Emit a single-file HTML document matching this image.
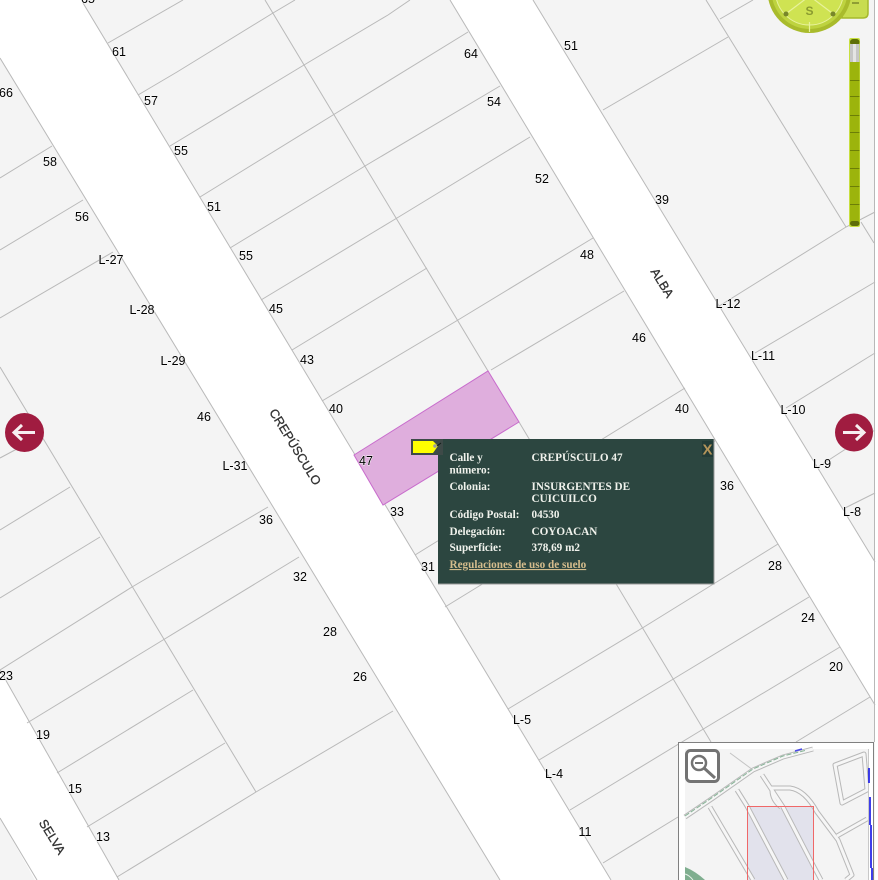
<!DOCTYPE html>
<html>
<head>
<meta charset="utf-8">
<title>Mapa</title>
<style>
html,body{margin:0;padding:0;background:#fff;width:878px;height:880px;overflow:hidden}
svg{display:block;filter:blur(.3px)}
.l text{font:12.5px "Liberation Sans",sans-serif;fill:#000;text-anchor:middle;paint-order:stroke;stroke:#f8f8f8;stroke-width:1px}
.s{font:12.5px "Liberation Sans",sans-serif;fill:#333;text-anchor:middle;stroke:#333;stroke-width:.3px}
.p text{font:bold 11.2px "Liberation Serif",serif;fill:#f0f2ec}
</style>
</head>
<body>
<svg width="878" height="880" viewBox="0 0 878 880" xmlns="http://www.w3.org/2000/svg">
<rect width="878" height="880" fill="#f4f4f4"/>
<!-- roads -->
<g fill="#fff">
<polygon points="0,58 0,-2 80,-2 83,3 611,880 500,880"/>
<polygon points="450,0 533,0 875,562 875,705"/>
<polygon points="0,670 117,877 119,880 35,880 0,818"/>
<rect x="875" y="0" width="3" height="880"/>
</g>
<!-- road edges and lot lines -->
<g fill="none" stroke="#b9b9b9" stroke-width="1">
<path d="M83,3 L611,880"/>
<path d="M0,58 L500,880"/>
<path d="M450,0 L875,705"/>
<path d="M533,0 L875,562"/>
<path d="M0,670 L119,880"/>
<path d="M0,818 L37,880"/>
<path d="M265,0 L488,371"/>
<path d="M519,422 L711,742"/>
<path d="M0,367 L256,792"/>
<path d="M706,0 L846,227"/>
<path d="M861,222 L874,243"/>
<path d="M108,43 L183,0"/>
<path d="M138,95 L177,72 L273,13 L295,0"/>
<path d="M170,146 L304,65 L388,15 L410,0"/>
<path d="M200,197 L333,115 L468,32"/>
<path d="M230,248 L365,166 L500,86"/>
<path d="M261,300 L397,218 L530,137"/>
<path d="M292,350 L427,268"/>
<path d="M322,401 L458,320 L593,238"/>
<path d="M491,370 L624,291"/>
<path d="M415,555 L685,388"/>
<path d="M445,607 L715,441"/>
<path d="M508,709 L644,627 L778,544"/>
<path d="M539,760 L675,678 L809,597"/>
<path d="M570,810 L705,728 L840,647"/>
<path d="M603,863 L678,817"/>
<path d="M796,742 L870,697"/>
<path d="M720,19 L753,0"/>
<path d="M603,110 L728,37"/>
<path d="M716,308 L846,227 L875,212"/>
<path d="M755,353 L875,282"/>
<path d="M786,408 L875,353"/>
<path d="M818,467 L875,430"/>
<path d="M845,508 L875,493"/>
<path d="M52,146 L0,178"/>
<path d="M83,200 L0,250"/>
<path d="M113,252 L0,318"/>
<path d="M43,435 L0,458"/>
<path d="M70,487 L0,530"/>
<path d="M100,537 L0,598"/>
<path d="M268,507 L132,587 L0,670"/>
<path d="M299,557 L163,640 L27,723"/>
<path d="M193,690 L57,773"/>
<path d="M225,743 L87,827"/>
<path d="M393,711 L256,792 L117,877"/>
</g>
<!-- selected lot -->
<polygon points="354,455 488,371 519,422 383,505" fill="#dfaedd" stroke="#c86ccc" stroke-width="1"/>
<!-- lot numbers -->
<g class="l">
<text x="88" y="3">65</text><text x="119" y="56">61</text><text x="151" y="105">57</text><text x="181" y="155">55</text>
<text x="214" y="211">51</text><text x="246" y="260">55</text><text x="276" y="313">45</text><text x="307" y="364">43</text>
<text x="336" y="413">40</text><text x="6" y="97">66</text><text x="50" y="166">58</text><text x="82" y="221">56</text>
<text x="111" y="264">L-27</text><text x="142" y="314">L-28</text><text x="173" y="365">L-29</text><text x="204" y="421">46</text>
<text x="235" y="470">L-31</text><text x="266" y="524">36</text><text x="300" y="581">32</text><text x="330" y="636">28</text>
<text x="360" y="681">26</text><text x="6" y="680">23</text><text x="43" y="739">19</text><text x="75" y="793">15</text>
<text x="103" y="841">13</text><text x="366" y="465">47</text><text x="397" y="516">33</text><text x="428" y="571">31</text>
<text x="471" y="58">64</text><text x="494" y="106">54</text><text x="571" y="50">51</text><text x="542" y="183">52</text>
<text x="587" y="259">48</text><text x="639" y="342">46</text><text x="682" y="413">40</text><text x="662" y="204">39</text>
<text x="728" y="308">L-12</text><text x="763" y="360">L-11</text><text x="793" y="414">L-10</text><text x="822" y="468">L-9</text>
<text x="852" y="516">L-8</text><text x="727" y="490">36</text><text x="775" y="570">28</text><text x="808" y="622">24</text>
<text x="836" y="671">20</text><text x="522" y="724">L-5</text><text x="554" y="778">L-4</text><text x="585" y="836">11</text>
</g>
<!-- street names -->
<text class="s" transform="translate(295,447) rotate(58.5)" y="4">CREPÚSCULO</text>
<text class="s" transform="translate(662,283) rotate(58.5)" y="4">ALBA</text>
<text class="s" transform="translate(52,837) rotate(58.5)" y="4">SELVA</text>
<!-- marker -->
<rect x="411" y="439" width="32" height="16" fill="#3e4a48" opacity=".9"/>
<!-- popup -->
<rect x="438" y="439" width="276.500" height="145.500" fill="#9a9a9a"/>
<rect x="438" y="439" width="275.500" height="144.500" fill="#2a443e" fill-opacity=".98"/>
<rect x="411" y="439" width="32" height="16" fill="#3e4a48"/>
<polygon points="413,441 433,441 438,446 433,453 413,453" fill="#ffff00"/>
<circle cx="435" cy="446" r="1.800" fill="#9a9aa0"/>
<path d="M437,446 L441,443" stroke="#141c1a" stroke-width="1"/>
<g class="p">
<text x="449.500" y="461">Calle y</text><text x="449.500" y="473.500">número:</text>
<text x="531.500" y="461">CREPÚSCULO 47</text>
<text x="449.500" y="490">Colonia:</text>
<text x="531.500" y="490">INSURGENTES DE</text><text x="531.500" y="502">CUICUILCO</text>
<text x="449.500" y="518">Código Postal:</text><text x="531.500" y="518">04530</text>
<text x="449.500" y="535">Delegación:</text><text x="531.500" y="535">COYOACAN</text>
<text x="449.500" y="551">Superficie:</text><text x="531.500" y="551">378,69 m2</text>
<text x="449.500" y="568" style="fill:#d4bc8c;text-decoration:underline">Regulaciones de uso de suelo</text>
</g>
<rect x="702" y="441" width="11" height="16" fill="#223c38"/>
<text x="707.500" y="454.500" style="font:bold 15px 'Liberation Sans',sans-serif;fill:#b3945a" text-anchor="middle">X</text>
<!-- arrows -->
<circle cx="24.500" cy="432.500" r="19.500" fill="#a01c40"/>
<path d="M35,432.500 H14 M22,425 L14,432.500 L22,440" fill="none" stroke="#f6eef0" stroke-width="3"/>
<circle cx="854" cy="432.500" r="19" fill="#a01c40"/>
<path d="M843,432.500 H864 M856,425 L864,432.500 L856,440" fill="none" stroke="#f6eef0" stroke-width="3"/>
<!-- compass -->
<path d="M844,-2 H868 V13 Q868,18 863,18 H842 Z" fill="#c8dc50" stroke="#a6b92c" stroke-width="1.500"/>
<path d="M852,3 H859" stroke="#7c8a2a" stroke-width="1.500"/>
<circle cx="809.500" cy="-9" r="42" fill="#a9bb2c"/>
<circle cx="809.500" cy="-9" r="38" fill="#bed33f"/>
<circle cx="809.500" cy="-9" r="34" fill="#cfe352" stroke="#e8f29c" stroke-width="1"/>
<path d="M809.500,22 V32 M787,13 L809.500,-4 L832,13" fill="none" stroke="#e8f29c" stroke-width="1.200"/>
<circle cx="786" cy="14" r="2.500" fill="#78862a"/><circle cx="833" cy="14" r="2.500" fill="#78862a"/>
<text x="809.500" y="15" style="font:bold 12px 'Liberation Sans',sans-serif;fill:#8b9c30" text-anchor="middle">S</text>
<!-- slider -->
<rect x="849" y="38" width="11" height="189" rx="2" fill="#c8e040"/>
<rect x="850" y="39" width="9.500" height="187" rx="4" fill="#9cb40c"/>
<rect x="850" y="39" width="9.500" height="6" rx="3" fill="#5e6e08"/>
<rect x="850" y="44" width="9.500" height="18" fill="#c6c6c6"/>
<rect x="853" y="44" width="3" height="18" fill="#e4e4e4"/>
<rect x="850" y="221" width="9.500" height="5" rx="2.500" fill="#5e6e08"/>
<path d="M850,80.500 H859.500 M850,96.500 H859.500 M850,115.500 H859.500 M850,132.500 H859.500 M850,150.500 H859.500 M850,168.500 H859.500 M850,186.500 H859.500 M850,204.500 H859.500" stroke="#6c7e08" stroke-width="1"/>
<!-- right edge -->
<path d="M874.500,0 V742" stroke="#b8b8b8" stroke-width="1"/>
<!-- minimap -->
<rect x="678.500" y="742.500" width="195" height="138" fill="#fff" stroke="#808080" stroke-width="1"/>
<rect x="685" y="749" width="183" height="131" fill="#f4f4f4"/>
<path d="M730,753 L753,770" stroke="#c4c4c4" stroke-width="1" fill="none"/>
<polygon points="747,806 814,806 814,880 747,880" fill="#e2e2ec"/>
<g fill="none" stroke="#b8b8b8" stroke-width="5" stroke-linejoin="round">
<path d="M685,817 L713,798 L753,770 L783,757 L813,749"/>
<path d="M710,807 L753,880"/>
<path d="M737,790 L747,806 L786,880"/>
<path d="M762,775 L783,807 L813,865 L821,880"/>
<path d="M770,788 H790 Q805,790 817,812 L838,840 L852,875 L846,880"/>
<path d="M772,790 Q772,800 781,807"/>
<path d="M837,836 L867,819"/>
<path d="M835,765 L864,754 L867,790 L842,803 Z"/>
</g>
<g fill="none" stroke="#f6f6f6" stroke-width="3" stroke-linejoin="round">
<path d="M685,817 L713,798 L753,770 L783,757 L813,749"/>
<path d="M710,807 L753,880"/>
<path d="M737,790 L747,806 L786,880"/>
<path d="M762,775 L783,807 L813,865 L821,880"/>
<path d="M770,788 H790 Q805,790 817,812 L838,840 L852,875 L846,880"/>
<path d="M772,790 Q772,800 781,807"/>
<path d="M837,836 L867,819"/>
<path d="M835,765 L864,754 L867,790 L842,803 Z"/>
</g>
<path d="M685,816 L713,797 L753,769 L783,756 L807,750" fill="none" stroke="#86b496" stroke-width="1" stroke-dasharray="5 2"/>
<rect x="747.500" y="806.500" width="66" height="80" fill="none" stroke="#f06868" stroke-width="1"/>
<path d="M685,867 Q695,871 705,880 H685 Z" fill="#7fae8f"/>
<path d="M685,874 Q689,875 693,880" fill="none" stroke="#e6f0e8" stroke-width="1"/>
<rect x="868" y="749" width="6" height="131" fill="#fff"/>
<path d="M868.500,749 V880" stroke="#c8c8c8" stroke-width="1"/>
<path d="M869,768 V783 M870,797 V825 M871,825 V868 M872,868 V880" stroke="#2a2ae8" stroke-width="1.800" fill="none"/>
<path d="M795,751 L802,749" stroke="#4a4ae8" stroke-width="1.500"/>
<path d="M873.500,742 V880" stroke="#808080" stroke-width="1"/>
<rect x="686.500" y="750.500" width="32" height="31" rx="4" fill="#fff" stroke="#737373" stroke-width="3"/>
<circle cx="699" cy="763" r="7" fill="none" stroke="#737373" stroke-width="2.500"/>
<path d="M695,763 H703" stroke="#737373" stroke-width="2"/>
<path d="M704,768 L715,778" stroke="#737373" stroke-width="3"/>
</svg>
</body>
</html>
